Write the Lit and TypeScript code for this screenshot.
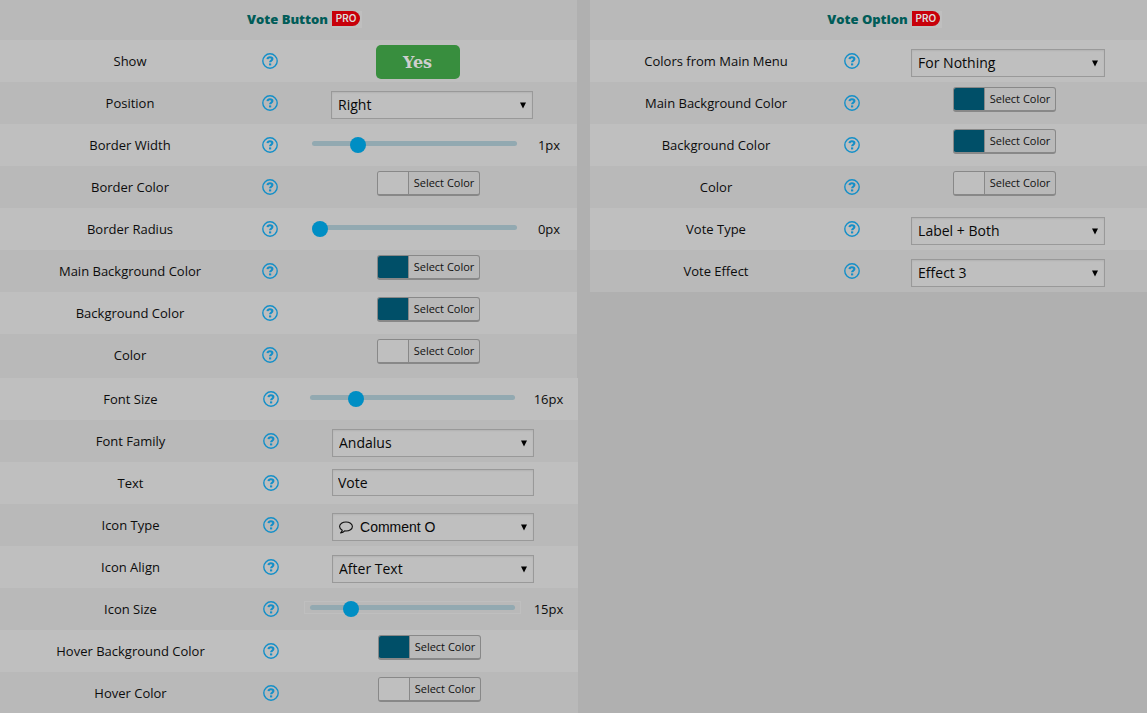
import { LitElement, html, css, svg, nothing } from "lit";
import { customElement, property } from "lit/decorators.js";

type Field =
  | { kind: "toggle"; label: string }
  | { kind: "select"; label: string; value: string; icon?: boolean }
  | { kind: "text"; label: string; value: string }
  | { kind: "color"; label: string; color: string }
  | { kind: "range"; label: string; min: number; max: number; value: number; framed?: boolean };

const TEAL = "#004f68";
const BLANK = "#bfbfbf";

const buttonGeneral: Field[] = [
  { kind: "toggle", label: "Show" },
  { kind: "select", label: "Position", value: "Right" },
  { kind: "range", label: "Border Width", min: 0, max: 5, value: 1 },
  { kind: "color", label: "Border Color", color: BLANK },
  { kind: "range", label: "Border Radius", min: 0, max: 50, value: 0 },
  { kind: "color", label: "Main Background Color", color: TEAL },
  { kind: "color", label: "Background Color", color: TEAL },
  { kind: "color", label: "Color", color: BLANK },
];

const buttonText: Field[] = [
  { kind: "range", label: "Font Size", min: 8, max: 48, value: 16 },
  { kind: "select", label: "Font Family", value: "Andalus" },
  { kind: "text", label: "Text", value: "Vote" },
  { kind: "select", label: "Icon Type", value: "Comment O", icon: true },
  { kind: "select", label: "Icon Align", value: "After Text" },
  { kind: "range", label: "Icon Size", min: 8, max: 48, value: 15, framed: true },
  { kind: "color", label: "Hover Background Color", color: TEAL },
  { kind: "color", label: "Hover Color", color: BLANK },
];

const optionFields: Field[] = [
  { kind: "select", label: "Colors from Main Menu", value: "For Nothing" },
  { kind: "color", label: "Main Background Color", color: TEAL },
  { kind: "color", label: "Background Color", color: TEAL },
  { kind: "color", label: "Color", color: BLANK },
  { kind: "select", label: "Vote Type", value: "Label + Both" },
  { kind: "select", label: "Vote Effect", value: "Effect 3" },
];

const helpIcon = svg`<svg width="16" height="16" viewBox="0 0 16 16" fill="none" aria-hidden="true">
  <circle cx="8" cy="8" r="7.2" stroke="currentColor" stroke-width="1.4"/>
  <path d="M5.500 6.100C5.700 4.900 6.700 4.300 7.900 4.300c1.500 0 2.500.7 2.500 1.800 0 1.600-2.300 1.500-2.300 3.200" stroke="currentColor" stroke-width="2.100"/>
  <path d="M7 10.400h2.200v2H7z" fill="currentColor"/>
</svg>`;

const commentIcon = svg`<svg class="comment" width="14" height="13" viewBox="0 0 14 13" fill="none" aria-hidden="true">
  <path d="M7 1C3.600 1 .6 2.900.6 5.500.6 7 1.600 8.400 3.300 9.200 3.100 10.400 2.500 11.200 1.600 12c1.800-.2 3.100-.9 4.100-2.100.4.1.9.1 1.300.1 3.400 0 6.400-1.900 6.400-4.500S10.400 1 7 1Z" stroke="currentColor" stroke-width="1.100" stroke-linejoin="round"/>
</svg>`;

@customElement("settings-row")
export class SettingsRow extends LitElement {
  @property({ attribute: false }) field!: Field;

  static styles = css`
    :host {
      display: grid;
      grid-template-columns: var(--row-columns);
      min-height: 42px;
      color: #0c0c0c;
      font: 13px/20px "Open Sans", sans-serif;
    }
    * {
      box-sizing: border-box;
    }
    .label {
      place-self: center;
    }
    .help {
      display: block;
      align-self: center;
      justify-self: center;
      width: 16px;
      height: 16px;
      padding: 0;
      border: 0;
      background: none;
      color: #148fc8;
    }
    .help svg {
      display: block;
    }
    .control {
      display: flex;
      justify-content: center;
      align-items: flex-start;
    }
    .toggle {
      width: 84px;
      height: 34px;
      margin: 5px 22px 0 0;
      padding: 2px 0 0;
      border: 0;
      border-radius: 5px;
      background: #388e3e;
      color: #cfcfcf;
      font: bold 16px/20px "Roboto Slab", "DejaVu Serif", serif;
    }
    .wide {
      position: relative;
      width: 68%;
      margin: 9px 0 0 7px;
    }
    select,
    .text {
      display: block;
      width: 100%;
      height: 28px;
      margin: 0;
      padding: 0 24px 0 6px;
      border: 1px solid #999;
      border-radius: 0;
      background: #bfbfbf;
      box-shadow: inset 0 1px 2px rgba(0, 0, 0, 0.07);
      color: #080808;
      font: 14px/20px "Open Sans", sans-serif;
      appearance: none;
    }
    select {
      background: #bfbfbf
        url("data:image/svg+xml,%3Csvg xmlns='http://www.w3.org/2000/svg' width='8' height='7'%3E%3Cpath d='M1 .5h6L4 6.500z'/%3E%3C/svg%3E")
        no-repeat right 5px center;
    }
    .text {
      height: 27px;
      padding: 0 5px;
    }
    .wide.entry {
      margin-top: 7px;
    }
    .iconic select {
      padding-left: 27px;
      font-family: "Liberation Sans", sans-serif;
    }
    .comment {
      position: absolute;
      left: 7px;
      top: 8px;
    }
    .color {
      display: flex;
      height: 25px;
      margin-top: 5px;
      padding: 0;
      border: 1px solid #888;
      border-bottom-width: 2px;
      border-radius: 3px;
      background: #b9b9b9;
      color: #111;
      font: 11px/22px "Open Sans", sans-serif;
      overflow: hidden;
    }
    .swatch {
      width: 31px;
      height: 22px;
      border-right: 1px solid #888;
    }
    .caption {
      padding: 0 5px;
    }
    .control.slide {
      align-items: center;
      justify-content: flex-start;
      padding-left: var(--slide-inset);
    }
    .range {
      flex: none;
      width: 217px;
      height: 13px;
      margin: 0 0 3px;
      padding: 0 5px;
      border: 1px solid transparent;
      background: none;
      appearance: none;
    }
    .range.framed {
      border-color: #bfbfbf;
    }
    .range::-webkit-slider-runnable-track {
      height: 5px;
      border-radius: 3px;
      background: #92a9b1;
    }
    .range::-webkit-slider-thumb {
      width: 16px;
      height: 16px;
      margin-top: -4px;
      border: 0;
      border-radius: 50%;
      background: #008ec4;
      appearance: none;
    }
    .value {
      flex: 1;
      padding-right: 2px;
      text-align: center;
    }
  `;

  private control() {
    const f = this.field;
    switch (f.kind) {
      case "toggle":
        return html`<div class="control"><button id="field" class="toggle" type="button">Yes</button></div>`;
      case "select":
        return html`<div class="control">
          <div class="wide ${f.icon ? "iconic" : ""}">
            <select id="field"><option selected>${f.value}</option></select>
            ${f.icon ? commentIcon : nothing}
          </div>
        </div>`;
      case "text":
        return html`<div class="control">
          <div class="wide entry"><input id="field" class="text" type="text" .value=${f.value} /></div>
        </div>`;
      case "color":
        return html`<div class="control">
          <button id="field" class="color" type="button">
            <span class="swatch" style="background:${f.color}"></span><span class="caption">Select Color</span>
          </button>
        </div>`;
      case "range":
        return html`<div class="control slide">
          <input id="field" class="range ${f.framed ? "framed" : ""}" type="range" min=${f.min} max=${f.max} .value=${String(f.value)} />
          <output class="value" for="field">${f.value}px</output>
        </div>`;
    }
  }

  render() {
    return html`<label class="label" for="field">${this.field.label}</label>
      <button class="help" type="button" aria-label="Help">${helpIcon}</button>
      ${this.control()}`;
  }
}

@customElement("app-root")
export class AppRoot extends LitElement {
  static styles = css`
    :host {
      display: block;
      min-height: 100vh;
      background: #b0b0b0;
    }
    .page {
      display: grid;
      grid-template-columns: 578fr 557fr;
      column-gap: 12px;
      align-items: start;
      height: 100vh;
      overflow-y: auto;
      scrollbar-width: none;
    }
    .general {
      margin-right: 1px;
      padding-bottom: 2px;
      background: #b9b9b9;
      --row-columns: 260fr 20fr 297fr;
      --slide-inset: 26px;
    }
    .typography {
      --row-columns: 261fr 20fr 297fr;
      --slide-inset: 23px;
    }
    .option {
      --row-columns: 252fr 20fr 285fr;
    }
    .title {
      display: flex;
      justify-content: center;
      align-items: center;
      gap: 4px;
      box-sizing: border-box;
      height: 40px;
      margin: 0;
      padding: 0 0 2px 32px;
      background: #b9b9b9;
      color: #005c58;
      font: 800 13px/20px "Open Sans", sans-serif;
    }
    .pro {
      padding: 0 2px 2px 0;
      background: #bfbfbf;
    }
    .badge {
      display: block;
      width: 28px;
      border-radius: 0 8px 8px 0;
      background: #c8000a;
      color: #dcdcdc;
      font: 600 10px/15px "Inter", sans-serif;
      text-align: center;
    }
    .row {
      background: #bfbfbf;
    }
    .row:nth-of-type(even) {
      background: #b9b9b9;
    }
  `;

  private title(text: string) {
    return html`<h2 class="title">${text}<span class="pro"><span class="badge">PRO</span></span></h2>`;
  }

  private rows(fields: Field[]) {
    return fields.map((field) => html`<settings-row class="row" .field=${field}></settings-row>`);
  }

  render() {
    return html`<main class="page">
      <section>
        <div class="general">${this.title("Vote Button")}${this.rows(buttonGeneral)}</div>
        <div class="typography">${this.rows(buttonText)}</div>
      </section>
      <section class="option">${this.title("Vote Option")}${this.rows(optionFields)}</section>
    </main>`;
  }
}
